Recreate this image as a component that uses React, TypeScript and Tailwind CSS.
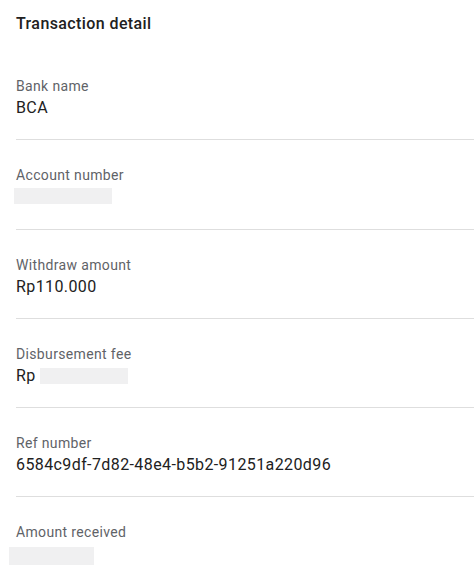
import React from "react";

type Row = { label: string; value: React.ReactNode };

const Redact = ({ className }: { className: string }) => (
  <span className={`inline-block bg-[#f0f0f1] align-middle ${className}`} />
);

export default function App() {
  const rows: Row[] = [
    { label: "Bank name", value: "BCA" },
    {
      label: "Account number",
      value: <Redact className="ml-[-2px] w-[98px] h-[16px] mt-[3px]" />,
    },
    { label: "Withdraw amount", value: "Rp110.000" },
    {
      label: "Disbursement fee",
      value: (
        <span className="flex items-center">
          <span>Rp</span>
          <Redact className="ml-[4px] w-[88px] h-[16px] mt-[1px]" />
        </span>
      ),
    },
    { label: "Ref number", value: "6584c9df-7d82-48e4-b5b2-91251a220d96" },
    {
      label: "Amount received",
      value: <Redact className="ml-[-7px] w-[85px] h-[18px] mt-[5px]" />,
    },
  ];

  return (
    <div
      className="w-[474px] h-[577px] overflow-hidden bg-white"
      style={{ fontFamily: "Roboto, 'Noto Sans', sans-serif" }}
    >
      <div className="pl-4 pt-3 mb-[15px] h-[36px] text-[16px] leading-[24px] font-medium tracking-[0.4px] text-[#212121]">
        Transaction detail
      </div>
      <div className="pl-4">
        {rows.map((r, i) => (
          <div
            key={i}
            className="pt-[25px] pb-[19.3px] border-b border-[#dedede]"
          >
            <div className="h-[20px] text-[14px] leading-[20px] tracking-[0.35px] text-[#5f6368]">
              {r.label}
            </div>
            <div className="h-[24px] text-[16px] leading-[24px] tracking-[0.4px] text-[#212121] flex items-start">
              {r.value}
            </div>
          </div>
        ))}
      </div>
    </div>
  );
}
